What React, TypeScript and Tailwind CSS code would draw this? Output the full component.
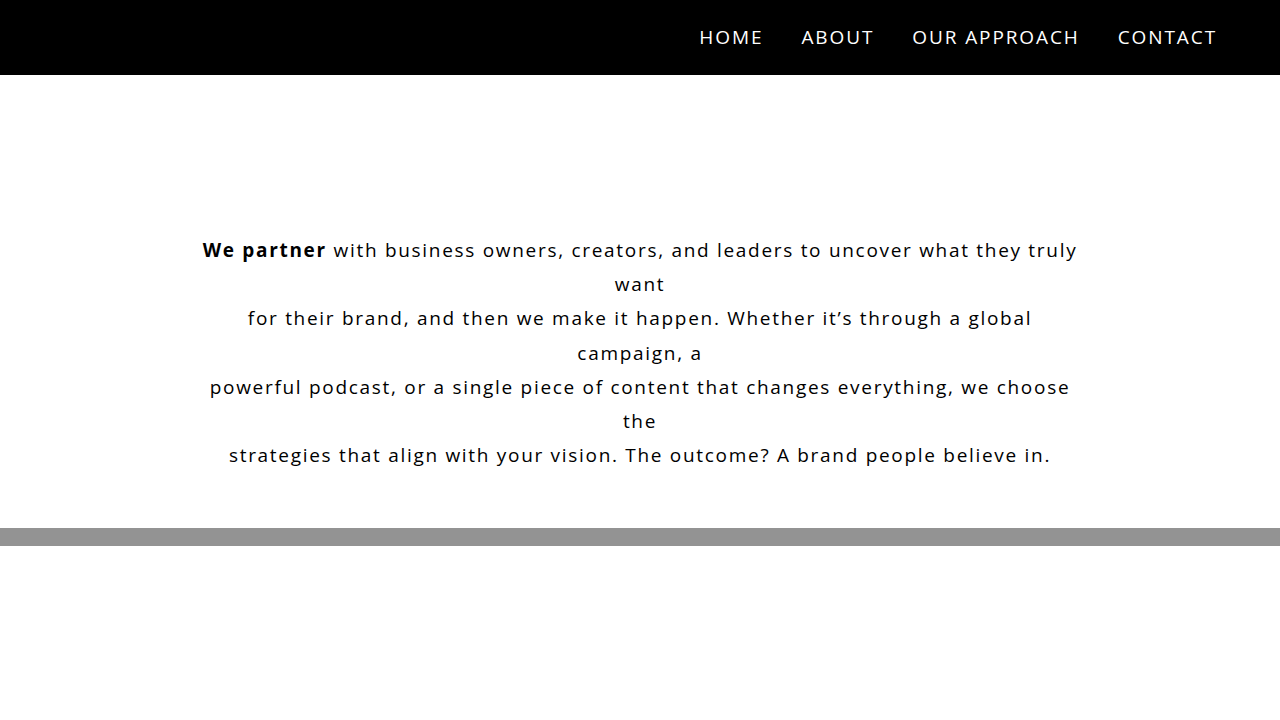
const navItems = ["Home", "About", "Our Approach", "Contact"];

const bodyFont = { fontFamily: '"Open Sans", "Liberation Sans", sans-serif' };

export default function App() {
  return (
    <div className="min-h-[720px] bg-white" style={bodyFont}>
      <header className="flex h-[75px] items-center justify-end bg-black pr-[63px]">
        <nav className="flex items-center gap-[38px]">
          {navItems.map((item) => (
            <a
              key={item}
              href="#"
              className="text-[19px] font-medium uppercase tracking-[1.9px] text-white"
            >
              {item}
            </a>
          ))}
        </nav>
      </header>

      <section className="flex justify-center pt-[158px] pb-[56px]">
        <p className="w-[900px] text-center text-[19px] leading-[34.2px] tracking-[1.7px] text-black">
          <strong className="font-bold">We partner</strong> with business owners, creators, and leaders to uncover what they truly
          <br />
          want
          <br />
          for their brand, and then we make it happen. Whether it’s through a global
          <br />
          campaign, a
          <br />
          powerful podcast, or a single piece of content that changes everything, we choose
          <br />
          the
          <br />
          strategies that align with your vision. The outcome? A brand people believe in.
        </p>
      </section>

      <div className="h-[18px] bg-[#939393]" />
    </div>
  );
}
